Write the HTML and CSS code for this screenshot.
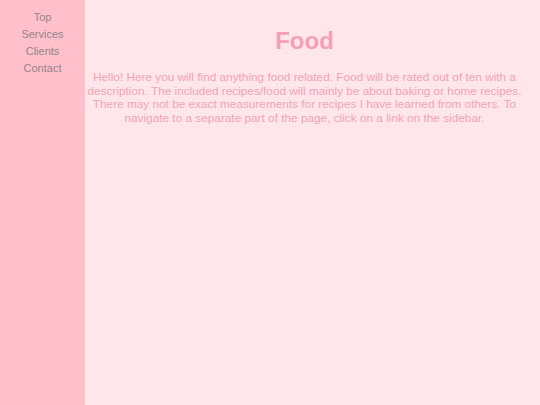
FILE: index.html
```html
<!DOCTYPE html>
<html>
<head>
<meta charset="utf-8">
<link rel="stylesheet" href="styles.css">
</head>
<body>
<div class="page">
  <nav class="sidebar">
    <a href="#top">Top</a>
    <a href="#services">Services</a>
    <a href="#clients">Clients</a>
    <a href="#contact">Contact</a>
  </nav>
  <main class="main">
    <h1 class="title">Food</h1>
    <p class="intro">Hello! Here you will find anything food related. Food will be rated out of ten with a description. The included recipes/food will mainly be about baking or home recipes. There may not be exact measurements for recipes I have learned from others. To navigate to a separate part of the page, click on a link on the sidebar.</p>
  </main>
</div>
</body>
</html>
```
FILE: styles.css
```css
html, body {
  margin: 0;
  padding: 0;
  height: 100%;
}
body {
  font-family: "Liberation Sans", Arial, sans-serif;
  background: #ffe6ea;
}
.page {
  display: flex;
  min-height: 100%;
}
.sidebar {
  width: 85px;
  flex: none;
  background: #ffc0cb;
  display: flex;
  flex-direction: column;
  align-items: center;
  padding-top: 9px;
}
.sidebar a {
  font-size: 11px;
  line-height: 17px;
  color: #928589;
  text-decoration: none;
}
.main {
  flex: 1;
  padding: 0 16px 0 0;
  text-align: center;
}
.title {
  margin: 27px 0 0;
  font-size: 24px;
  line-height: 28px;
  font-weight: bold;
  color: #f69fb4;
}
.intro {
  margin: 16px 0 0;
  font-size: 11.8px;
  line-height: 13.7px;
  color: #f4a2b8;
}
```
